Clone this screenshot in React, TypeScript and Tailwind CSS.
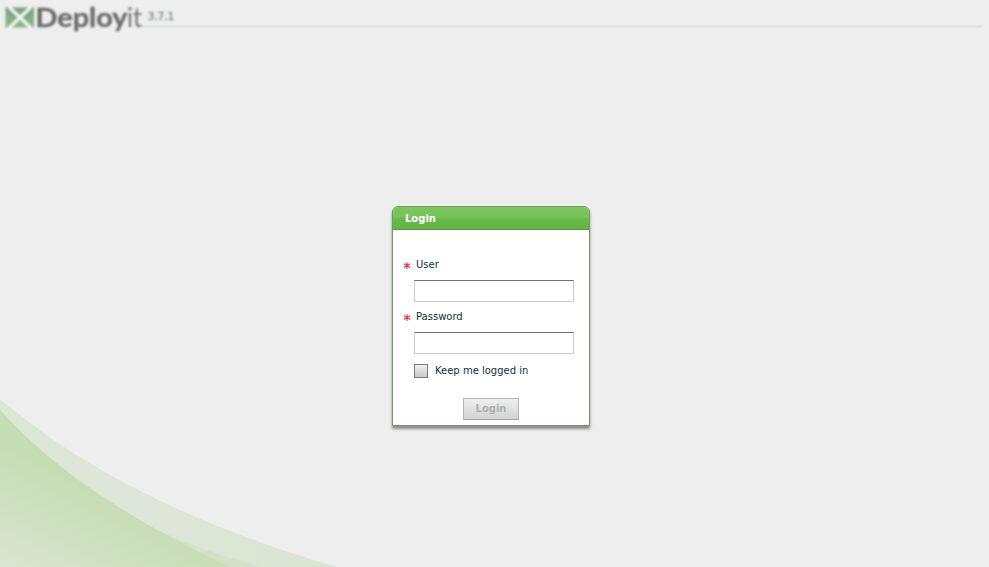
import React from "react";

function Swoosh() {
  return (
    <svg className="absolute bottom-0 left-0" width="350" height="177" viewBox="0 390 350 177">
      <defs>
        <linearGradient id="inner" gradientUnits="userSpaceOnUse" x1="88" y1="486" x2="30" y2="600">
          <stop offset="0" stopColor="#c6ddb3" />
          <stop offset="1" stopColor="#dce6d6" />
        </linearGradient>
        <linearGradient id="outer" gradientUnits="userSpaceOnUse" x1="0" y1="400" x2="330" y2="567">
          <stop offset="0" stopColor="#dbe6d3" />
          <stop offset="0.4" stopColor="#dee6d9" />
          <stop offset="1" stopColor="#d9e5d1" />
        </linearGradient>
      </defs>
      <path d="M0 399 C34 427 66 450 103 471 C172 510 252 543 340 568 H0Z" fill="url(#outer)" />
      <path d="M160 531 C193 547 228 558 265 568 H160Z" fill="#d2e1c7" />
      <path d="M0 410 C34 447 66 472 100 495 C142 523 185 546 233 568 H0Z" fill="url(#inner)" />
    </svg>
  );
}

function Logo() {
  return (
    <svg width="180" height="34" viewBox="0 0 180 34" className="shrink-0 blur-[0.8px]">
      <defs>
        <linearGradient id="mark" x1="0" y1="0" x2="0" y2="1">
          <stop offset="0" stopColor="#78a084" />
          <stop offset="1" stopColor="#8dba88" />
        </linearGradient>
      </defs>
      <rect x="5.5" y="7.5" width="28.5" height="20" fill="url(#mark)" />
      <path d="M9 7 L31 28 M31 7 L9 28" stroke="#f4f4f4" strokeWidth="3.2" />
      <text x="35.5" y="27" fontFamily="Lato, sans-serif" fontWeight="700" fontSize="26" textLength="92" lengthAdjust="spacingAndGlyphs" stroke="#6c6c6c" strokeWidth=".3" fill="#6c6c6c">Deploy</text>
      <text x="127" y="27" fontFamily="Lato, sans-serif" fontWeight="400" fontSize="27" textLength="15" lengthAdjust="spacingAndGlyphs" fill="#727272">it</text>
      <text x="148" y="20" fontFamily="DejaVu Sans, sans-serif" fontSize="10" textLength="26" stroke="#8a9898" strokeWidth=".5" fill="#8a9898">3.7.1</text>
    </svg>
  );
}

function Field({ label, type }: { label: string; type: string }) {
  return (
    <label className="block h-[52px]">
      <span className="flex h-[22px] items-start">
        <svg width="8" height="8" viewBox="0 0 8 8" className="mt-[4px] mr-[5px]">
          <path d="M4 .2V7M.9 1.8L7.1 5.4M.9 5.4L7.1 1.8" stroke="#dd3540" strokeWidth="1.1" />
        </svg>
        <span className="text-[10px] leading-[14px] text-[#0b333c]">{label}</span>
      </span>
      <input
        type={type}
        className="ml-[11px] block h-[22px] w-[160px] border border-[#cbcccc] border-t-[#6f7070] bg-white px-1 text-[10px] outline-none"
      />
    </label>
  );
}

export default function App() {
  return (
    <div className="relative flex h-[567px] w-full flex-col overflow-hidden bg-[#eeeeee] font-['DejaVu_Sans',Verdana,sans-serif]">
      <Swoosh />
      <header className="flex h-[34px] w-full items-start">
        <Logo />
        <div className="-ml-[38px] mt-[25px] mr-[6px] h-[3px] flex-1 rounded-r-sm bg-[#e3e3e3]" />
      </header>
      <main className="flex justify-start pt-[172px] pl-[392px]">
        <form
          onSubmit={(e) => e.preventDefault()}
          className="relative h-[220px] w-[198px] rounded-t-[6px] border border-[#779764] bg-white shadow-[0_3px_3px_rgba(0,0,0,0.42)]"
        >
          <h1 className="h-[23px] rounded-t-[5px] border-b border-[#579444] bg-[linear-gradient(#7bc65f_0%,#76c25a_48%,#6bba4d_52%,#65b247_100%)] pl-3 text-[10px] leading-[23px] font-bold text-white">
            Login
          </h1>
          <div className="pt-[28px] pl-[10px]">
            <Field label="User" type="text" />
            <Field label="Password" type="password" />
            <label className="ml-[11px] mt-[2px] flex h-[14px] items-center">
              <input
                type="checkbox"
                className="m-0 h-[14px] w-[14px] appearance-none border border-[#777] bg-[linear-gradient(#f0f0f0,#c9c9c9)]"
              />
              <span className="ml-[7px] text-[10px] leading-[14px] whitespace-nowrap text-[#0b333c]">Keep me logged in</span>
            </label>
            <button
              disabled
              className="mt-[20px] ml-[60px] block h-[22px] w-[56px] border border-[#b5b6b6] border-b-[#a4a5a5] bg-[linear-gradient(#efefef,#d2d2d2)] text-[10px] leading-[18px] font-bold text-[#a9b1b1]"
            >
              Login
            </button>
          </div>
        </form>
      </main>
    </div>
  );
}
